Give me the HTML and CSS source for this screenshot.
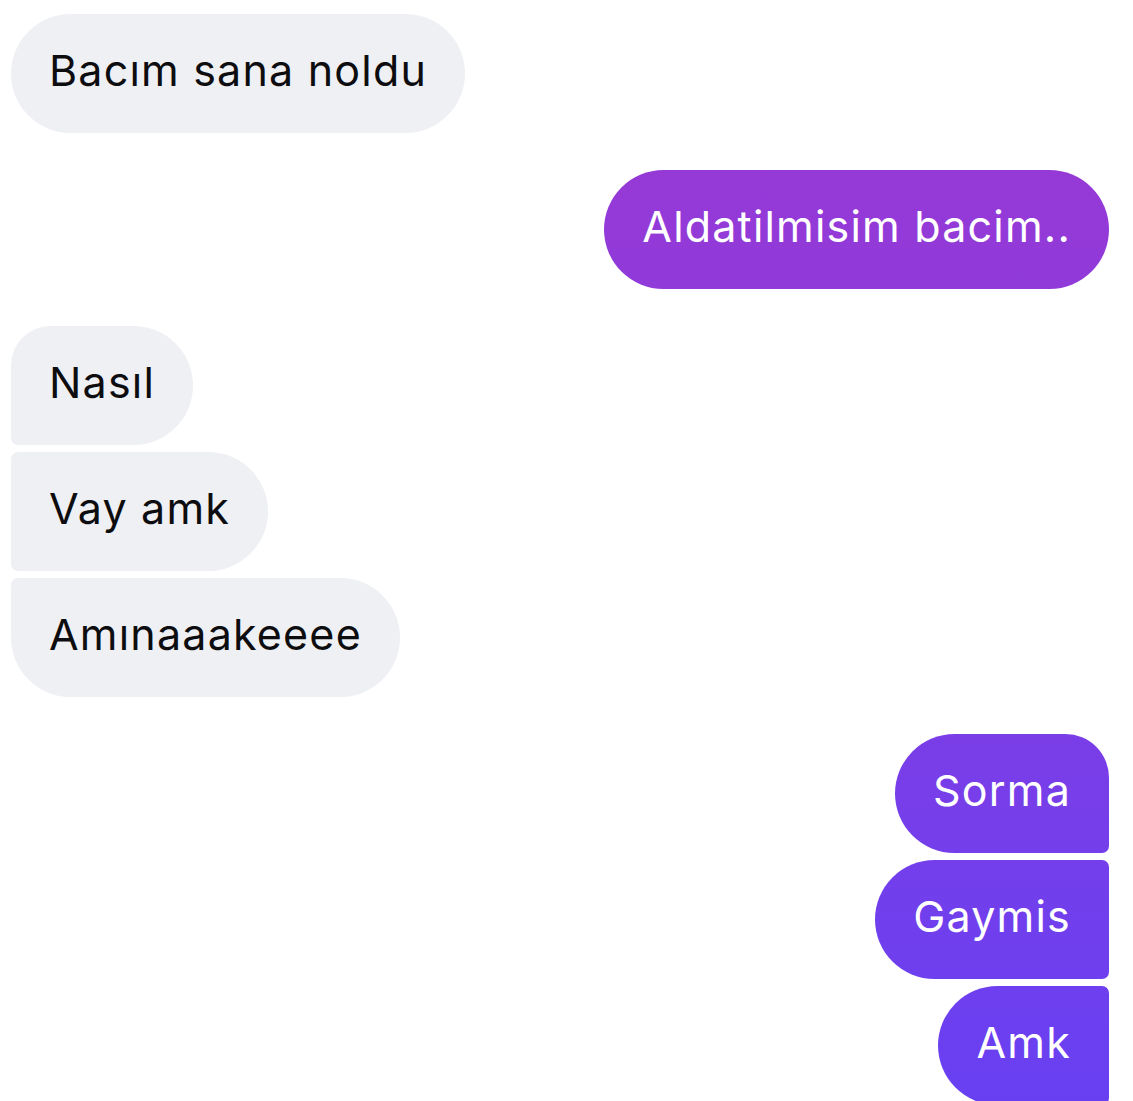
FILE: index.html
```html
<!DOCTYPE html>
<html lang="tr">
<head>
<meta charset="utf-8">
<title>Sohbet</title>
<link rel="stylesheet" href="styles.css">
</head>
<body>
<main class="chat">
  <div class="group in">
    <div class="bubble single">Bacım sana noldu</div>
  </div>
  <div class="group out">
    <div class="bubble single">Aldatilmisim bacim..</div>
  </div>
  <div class="group in">
    <div class="bubble first">Nasıl</div>
    <div class="bubble mid">Vay amk</div>
    <div class="bubble last">Amınaaakeeee</div>
  </div>
  <div class="group out">
    <div class="bubble first">Sorma</div>
    <div class="bubble mid">Gaymis</div>
    <div class="bubble mid">Amk</div>
  </div>
</main>
</body>
</html>
```
FILE: styles.css
```css
html, body {
  margin: 0;
  padding: 0;
  background: #ffffff;
}

body {
  font-family: Inter, "Noto Sans", "Liberation Sans", sans-serif;
}

.chat {
  display: flex;
  flex-direction: column;
  gap: 37px;
  padding: 14px 24px 0 11px;
}

.group {
  display: flex;
  flex-direction: column;
  gap: 7px;
}

.group.in {
  align-items: flex-start;
}

.group.out {
  align-items: flex-end;
}

.bubble {
  box-sizing: border-box;
  height: 119px;
  padding: 0 38px 6px 38px;
  display: flex;
  align-items: center;
  font-size: 43px;
  letter-spacing: 1.2px;
  line-height: 1;
  white-space: nowrap;
  border-radius: 60px;
}

.in .bubble {
  background: #eff0f4;
  color: #0d0d10;
}

.out .bubble {
  color: #ffffff;
  background: linear-gradient(180deg, #9e38d1 0%, #6840f2 100%);
  background-attachment: fixed;
}

.in .bubble.first {
  border-radius: 40px 60px 60px 7px;
}

.in .bubble.mid {
  border-radius: 7px 60px 60px 7px;
}

.in .bubble.last {
  border-radius: 7px 60px 60px 60px;
}

.out .bubble.first {
  border-radius: 60px 44px 7px 60px;
}

.out .bubble.mid {
  border-radius: 60px 7px 7px 60px;
}

.out .bubble.last {
  border-radius: 60px 7px 60px 60px;
}
```
